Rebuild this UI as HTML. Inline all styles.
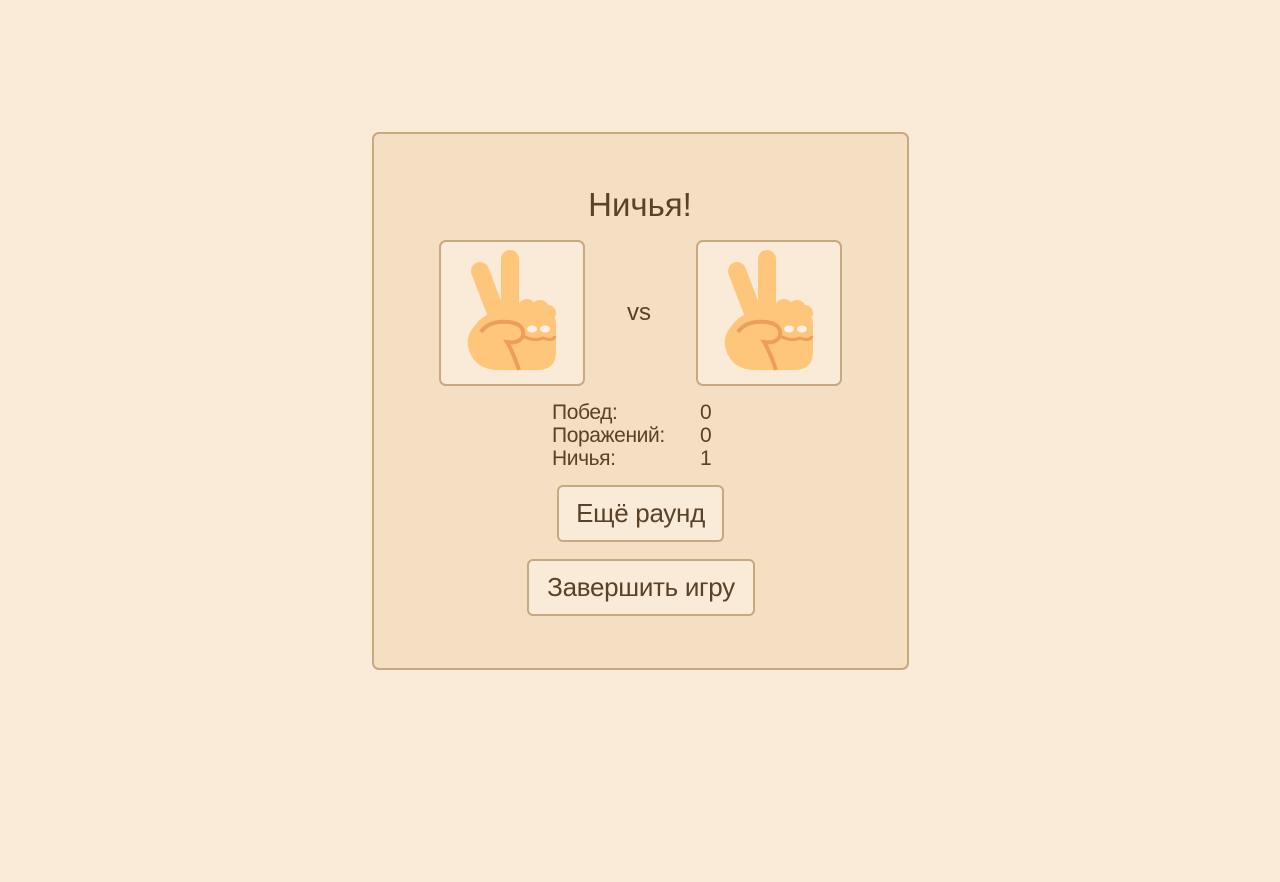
<!DOCTYPE html>
<html><head><meta charset="utf-8"><style>
body{margin:0;width:1280px;height:882px;background:#f9ebd7;font-family:"Liberation Sans",sans-serif;color:#5a4128;position:relative}
.card{position:absolute;left:372px;top:132px;width:537px;height:538px;background:#f4dfc3;border:2px solid #c6a97f;border-radius:7px;box-sizing:border-box}
h1{position:absolute;left:0;right:0;top:186px;margin:0;text-align:center;font-weight:normal;font-size:33px}
.box{position:absolute;top:240px;width:146px;height:146px;border:2px solid #c6a97f;border-radius:7px;background:#f9ebd7;box-sizing:border-box}
.vs{position:absolute;left:627px;top:299px;font-size:24px}
.st{position:absolute;left:552px;top:401px;font-size:21px;line-height:23px;letter-spacing:-0.4px}
.st span{position:absolute;left:148px}
.btn{position:absolute;border:2px solid #c6a97f;border-radius:6px;background:#f9ebd7;font-size:26px;box-sizing:border-box;text-align:center;letter-spacing:-0.3px}
</style></head><body>
<div class="card"></div>
<h1>Ничья!</h1>
<div class="box" style="left:439px"><svg width="142" height="142" viewBox="2 2 142 142"><g>
<line x1="41" y1="31" x2="59" y2="78" stroke="#fec67a" stroke-width="18" stroke-linecap="round"/>
<line x1="71" y1="19" x2="71" y2="78" stroke="#fec67a" stroke-width="18" stroke-linecap="round"/>
<circle cx="88" cy="68" r="9" fill="#fec67a"/><circle cx="101" cy="69" r="9" fill="#fec67a"/><circle cx="109" cy="73" r="8" fill="#fec67a"/>
<path d="M34 88 Q45 72 60 72 L108 72 Q117 72 117 85 L117 112 Q117 130 98 130 L60 130 Q36 130 30 110 Q26 98 34 88Z" fill="#fec67a"/>
<path d="M42 92 Q50 80 70 82 Q86 84 84 96 Q80 104 68 102 Q74 112 80 130" stroke="#ee9d5b" stroke-width="4" fill="none"/>
<path d="M84 96 Q95 102 104 98 Q114 102 116 96" stroke="#ee9d5b" stroke-width="3" fill="none"/>
<ellipse cx="93" cy="89" rx="5" ry="3.5" fill="#fff0ea"/><ellipse cx="106" cy="89" rx="5" ry="3.5" fill="#fff0ea"/>
</g></svg></div>
<div class="vs">vs</div>
<div class="box" style="left:696px"><svg width="142" height="142" viewBox="2 2 142 142"><g>
<line x1="41" y1="31" x2="59" y2="78" stroke="#fec67a" stroke-width="18" stroke-linecap="round"/>
<line x1="71" y1="19" x2="71" y2="78" stroke="#fec67a" stroke-width="18" stroke-linecap="round"/>
<circle cx="88" cy="68" r="9" fill="#fec67a"/><circle cx="101" cy="69" r="9" fill="#fec67a"/><circle cx="109" cy="73" r="8" fill="#fec67a"/>
<path d="M34 88 Q45 72 60 72 L108 72 Q117 72 117 85 L117 112 Q117 130 98 130 L60 130 Q36 130 30 110 Q26 98 34 88Z" fill="#fec67a"/>
<path d="M42 92 Q50 80 70 82 Q86 84 84 96 Q80 104 68 102 Q74 112 80 130" stroke="#ee9d5b" stroke-width="4" fill="none"/>
<path d="M84 96 Q95 102 104 98 Q114 102 116 96" stroke="#ee9d5b" stroke-width="3" fill="none"/>
<ellipse cx="93" cy="89" rx="5" ry="3.5" fill="#fff0ea"/><ellipse cx="106" cy="89" rx="5" ry="3.5" fill="#fff0ea"/>
</g></svg></div>
<div class="st">Побед:<span>0</span><br>Поражений:<span>0</span><br>Ничья:<span>1</span></div>
<div class="btn" style="left:557px;top:485px;width:167px;height:57px;line-height:53px">Ещё раунд</div>
<div class="btn" style="left:527px;top:559px;width:228px;height:57px;line-height:53px">Завершить игру</div>
</body></html>
